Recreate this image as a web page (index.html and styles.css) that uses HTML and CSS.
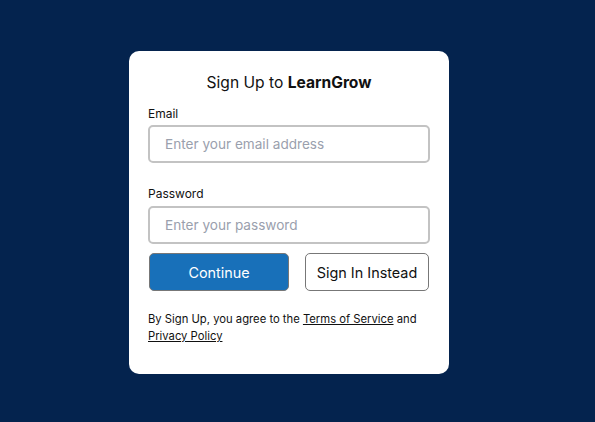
FILE: index.html
```html
<!DOCTYPE html>
<html>
<head>
<meta charset="utf-8">
<link rel="stylesheet" href="styles.css">
</head>
<body>
<div class="page">
  <form class="card">
    <h1 class="title">Sign Up to <strong>LearnGrow</strong></h1>
    <label class="label label-email" for="email">Email</label>
    <input class="input" id="email" type="email" placeholder="Enter your email address">
    <label class="label label-pw" for="pw">Password</label>
    <input class="input" id="pw" type="password" placeholder="Enter your password">
    <div class="actions">
      <button type="button" class="btn btn-primary">Continue</button>
      <button type="button" class="btn btn-secondary">Sign In Instead</button>
    </div>
    <p class="terms">By Sign Up, you agree to the <a href="#">Terms of Service</a> and <a href="#">Privacy Policy</a></p>
  </form>
</div>
</body>
</html>
```

FILE: styles.css
```css
* { box-sizing: border-box; }
html, body { margin: 0; height: 100%; }
body {
  background: #04234e;
  font-family: Inter, "Noto Sans", sans-serif;
  color: #111;
}
.page {
  display: flex;
  justify-content: center;
  padding: 51px 17px 0 0;
}
.card {
  width: 320px;
  background: #fff;
  border-radius: 10px;
  padding: 22px 19px 29px;
  display: flex;
  flex-direction: column;
}
.title {
  margin: 0 0 13px;
  font-size: 15.6px;
  font-weight: 400;
  text-align: center;
  line-height: 20px;
  color: #111;
}
.title strong { font-weight: 700; }
.label {
  font-size: 12px;
  line-height: 16px;
}
.label-email { margin-bottom: 3px; }
.label-pw { margin-top: 23px; margin-bottom: 4px; }
.input {
  width: 100%;
  height: 38px;
  border: 2px solid #c3c3c3;
  border-radius: 5px;
  padding: 0 15px;
  font-family: inherit;
  font-size: 13.6px;
  color: #111;
  outline: none;
}
.input::placeholder { color: #9aa0ad; }
.actions {
  display: flex;
  justify-content: space-between;
  margin-top: 9px;
}
.btn {
  height: 38px;
  font-family: inherit;
  font-size: 14.4px;
  border-radius: 5px;
  cursor: pointer;
  padding: 0;
}
.btn-primary {
  width: 140px;
  margin-left: 1px;
  background: #1870b9;
  color: #fff;
  border: 1px solid #777;
}
.btn-secondary {
  width: 124px;
  margin-right: 1px;
  background: #fff;
  color: #111;
  border: 1px solid #777;
}
.terms {
  margin: 20px 0 0;
  font-size: 11.25px;
  line-height: 17px;
  color: #111;
}
.terms a { color: #111; text-decoration: underline; }
```
